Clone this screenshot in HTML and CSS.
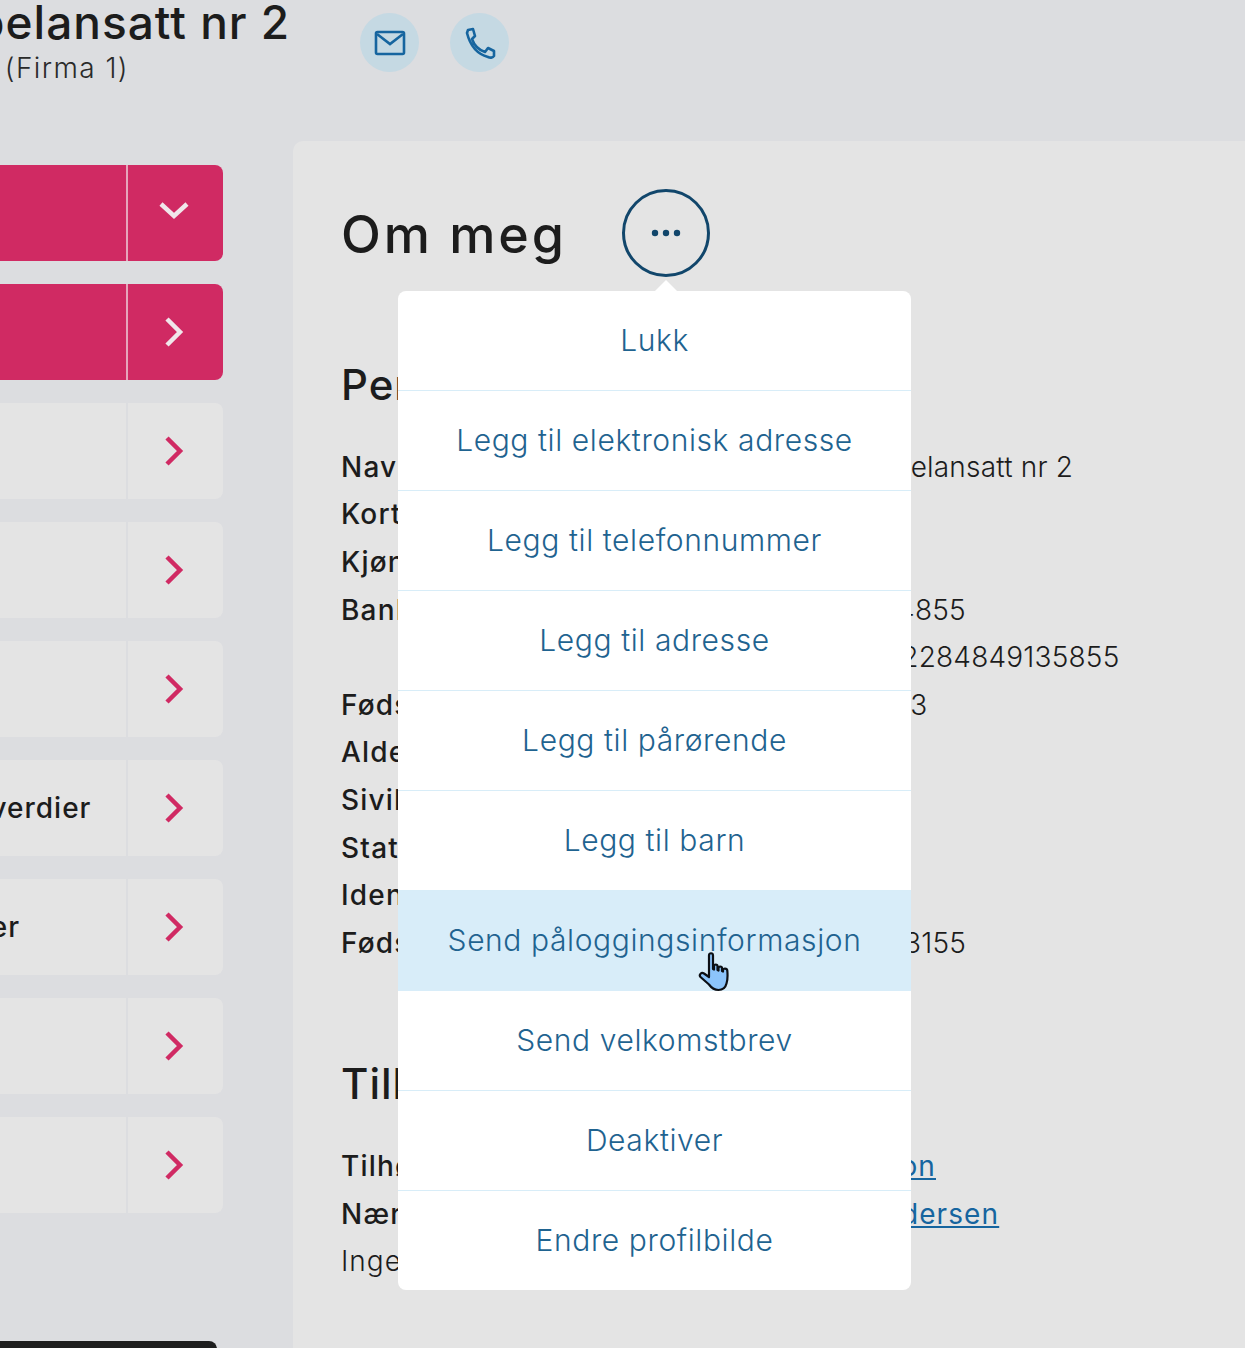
FILE: index.html
```html
<!DOCTYPE html>
<html lang="no">
<head>
<meta charset="utf-8">
<title>Om meg</title>
<link rel="stylesheet" href="styles.css">
</head>
<body>
<div class="page">
  <header class="top">
    <div class="who">
      <h1 class="name">Eksempelansatt nr 2</h1>
      <p class="firm">Fagrådgiver (Firma 1)</p>
    </div>
    <div class="contact">
      <a class="round"><svg viewBox="0 0 32 32" width="32" height="32"><rect x="2" y="5" width="28" height="22" rx="1.500" fill="none" stroke="#16659f" stroke-width="2.600"/><path d="M3 7l13 10L29 7" fill="none" stroke="#16659f" stroke-width="2.600"/></svg></a>
      <a class="round"><svg viewBox="0 0 32 32" width="32" height="32"><path d="M4 3l5-1 2 7-3 3c2 6 7 11 13 13l3-4 6 3v5c-1 2-4 2-6 1C13 27 6 18 3 6z" fill="none" stroke="#16659f" stroke-width="2.600" stroke-linejoin="round"/></svg></a>
    </div>
  </header>
  <div class="body">
    <aside class="side">
      <div class="tile hot"><span class="tile-label"></span><span class="tile-go"><svg class="chev down" viewBox="0 0 32 32" width="32" height="32"><path d="M3 10l13 12L29 10" fill="none" stroke="#f0e6ea" stroke-width="4.500"/></svg></span></div>
      <div class="tile hot"><span class="tile-label"></span><span class="tile-go"><svg class="chev" viewBox="0 0 32 32" width="32" height="32"><path d="M9 3l13 13L9 29" fill="none" stroke="#f0e6ea" stroke-width="4.500"/></svg></span></div>
      <div class="tile"><span class="tile-label"></span><span class="tile-go"><svg class="chev" viewBox="0 0 32 32" width="32" height="32"><path d="M9 3l13 13L9 29" fill="none" stroke="#d02a63" stroke-width="4.500"/></svg></span></div>
      <div class="tile"><span class="tile-label"></span><span class="tile-go"><svg class="chev" viewBox="0 0 32 32" width="32" height="32"><path d="M9 3l13 13L9 29" fill="none" stroke="#d02a63" stroke-width="4.500"/></svg></span></div>
      <div class="tile"><span class="tile-label"></span><span class="tile-go"><svg class="chev" viewBox="0 0 32 32" width="32" height="32"><path d="M9 3l13 13L9 29" fill="none" stroke="#d02a63" stroke-width="4.500"/></svg></span></div>
      <div class="tile"><span class="tile-label">Nøkkelverdier</span><span class="tile-go"><svg class="chev" viewBox="0 0 32 32" width="32" height="32"><path d="M9 3l13 13L9 29" fill="none" stroke="#d02a63" stroke-width="4.500"/></svg></span></div>
      <div class="tile"><span class="tile-label">Kalender</span><span class="tile-go"><svg class="chev" viewBox="0 0 32 32" width="32" height="32"><path d="M9 3l13 13L9 29" fill="none" stroke="#d02a63" stroke-width="4.500"/></svg></span></div>
      <div class="tile"><span class="tile-label"></span><span class="tile-go"><svg class="chev" viewBox="0 0 32 32" width="32" height="32"><path d="M9 3l13 13L9 29" fill="none" stroke="#d02a63" stroke-width="4.500"/></svg></span></div>
      <div class="tile"><span class="tile-label"></span><span class="tile-go"><svg class="chev" viewBox="0 0 32 32" width="32" height="32"><path d="M9 3l13 13L9 29" fill="none" stroke="#d02a63" stroke-width="4.500"/></svg></span></div>
      <div class="dark-bar"></div>
    </aside>
    <main class="panel">
      <div class="panel-head">
        <h2 class="title">Om meg</h2>
        <button class="more"><svg viewBox="0 0 32 8" width="32" height="8"><circle cx="5" cy="4" r="3.200"/><circle cx="16" cy="4" r="3.200"/><circle cx="27" cy="4" r="3.200"/></svg></button>
      </div>
      <h3 class="section first">Personalia</h3>
      <dl class="facts">
        <dt>Navn</dt><dd>Eksempelansatt nr 2</dd>
        <dt>Kortnavn</dt><dd></dd>
        <dt>Kjønn</dt><dd></dd>
        <dt>Bankkonto</dt><dd>1351284855</dd>
        <dt></dt><dd>NO0022284849135855</dd>
        <dt>Fødselsdato</dt><dd>4.01.1983</dd>
        <dt>Alder</dt><dd></dd>
        <dt>Sivilstatus</dt><dd></dd>
        <dt>Statsborger</dt><dd></dd>
        <dt>Identitet</dt><dd></dd>
        <dt>Fødselsnr</dt><dd>0108833155</dd>
      </dl>
      <h3 class="section second">Tilhørighet</h3>
      <dl class="facts">
        <dt>Tilhører</dt><dd><a class="link">IT-region</a></dd>
        <dt>Nærmeste leder</dt><dd><a class="link">Per Andersen</a></dd>
      </dl>
      <p class="none">Ingen underordnede</p>
      <div class="menu-arrow"></div>
      <nav class="menu">
        <a class="menu-item">Lukk</a>
        <a class="menu-item">Legg til elektronisk adresse</a>
        <a class="menu-item">Legg til telefonnummer</a>
        <a class="menu-item">Legg til adresse</a>
        <a class="menu-item">Legg til pårørende</a>
        <a class="menu-item">Legg til barn</a>
        <a class="menu-item active">Send påloggingsinformasjon</a>
        <a class="menu-item">Send velkomstbrev</a>
        <a class="menu-item">Deaktiver</a>
        <a class="menu-item">Endre profilbilde</a>
      </nav>
      <svg class="cursor" viewBox="0 0 32 40" width="32" height="40"><path d="M11 3.500c0-3 4-3 4 0V17l1 .5V14c0-2 3.500-2 3.500 0v4l1 .5V16c0-2 3.500-2 3.500 0v3l1 .5V18c0-2 4-2 4.300.5.500 5.500.2 10-.8 13-1 4-3.500 6.500-8 6.500-4.500 0-7-2-9.500-5.500L2.500 25c-2-2.500 1-5 3.500-3.500L11 25z" fill="#8cc4fb" stroke="#0c0f14" stroke-width="2.200" stroke-linejoin="round"/></svg>
    </main>
  </div>
</div>
</body>
</html>
```
FILE: styles.css
```css
* { box-sizing: border-box; }
html, body { margin: 0; padding: 0; }
body { font-family: Inter, "Open Sans", sans-serif; color: #1c1c1c; background: #dcdde0; }
.page { width: 1245px; height: 1348px; overflow: hidden; background: #dcdde0; }

.top { height: 141px; display: flex; align-items: flex-start; margin-left: -175px; }
.who { width: 535px; flex: none; }
.name { margin: -6px 0 0; font-size: 46px; line-height: 56px; font-weight: 500; letter-spacing: 1px; white-space: nowrap; }
.firm { margin: 0; font-size: 28px; line-height: 36px; font-weight: 300; letter-spacing: 1.4px; color: #2a2a2a; white-space: nowrap; }
.contact { display: flex; gap: 31px; padding-top: 13px; }
.round { width: 59px; height: 59px; border-radius: 50%; background: #c5d9e3; display: flex; align-items: center; justify-content: center; }

.body { display: flex; height: 1207px; }
.side { width: 403px; margin-left: -180px; margin-right: 70px; padding-top: 24px; display: flex; flex-direction: column; gap: 23.5px; flex: none; }
.tile { height: 95.5px; display: flex; background: #e4e4e4; border-radius: 8px; flex: none; }
.tile.hot { background: #d02a63; }
.tile-label { flex: 1; padding-left: 72px; font-size: 28px; font-weight: 500; letter-spacing: 1px; align-self: center; white-space: nowrap; overflow: hidden; }
.tile-go { width: 97px; display: flex; align-items: center; justify-content: center; border-left: 2px solid #dcdde0; padding-right: 4px; }
.tile.hot .tile-go { border-left-color: #e6a5bb; }
.chev.down { margin-bottom: 5px; }
.dark-bar { width: 397px; height: 30px; background: #1e1e1e; border-radius: 8px 8px 0 0; margin-top: 104.5px; flex: none; }

.panel { position: relative; flex: 1; background: #e4e4e4; border-radius: 10px 0 0 0; padding: 48px 0 0 48px; min-width: 0; }
.panel-head { display: flex; align-items: center; gap: 57px; height: 88px; }
.title { margin: 4px 0 0; width: 224px; font-size: 52px; font-weight: 500; letter-spacing: 2.8px; line-height: 84px; white-space: nowrap; flex: none; }
.more { width: 88px; height: 88px; border: 3px solid #11466b; border-radius: 50%; background: transparent; padding: 0; display: flex; align-items: center; justify-content: center; flex: none; }
.more svg { fill: #11466b; }
.section { margin: 0; font-size: 42px; line-height: 56px; font-weight: 500; letter-spacing: 1px; white-space: nowrap; }
.section.first { margin-top: 80px; margin-bottom: 30px; }
.section.second { margin-top: 89px; margin-bottom: 31px; }
.facts { margin: 0; display: grid; grid-template-columns: 465px 1fr; grid-auto-rows: 47.6px; align-items: center; font-size: 28px; }
.facts dt { font-weight: 500; letter-spacing: 1.2px; white-space: nowrap; }
.facts dd { margin: 0; font-weight: 300; letter-spacing: .2px; white-space: nowrap; }
.link { color: #16659f; text-decoration: underline; font-weight: 400; letter-spacing: 1.1px; }
.none { margin: 0; font-size: 28px; line-height: 47.6px; font-weight: 300; letter-spacing: 1px; white-space: nowrap; }

.menu-arrow { position: absolute; left: 362px; top: 139px; width: 0; height: 0; border-left: 11px solid transparent; border-right: 11px solid transparent; border-bottom: 11px solid #fff; }
.menu { position: absolute; left: 105px; top: 150px; width: 513px; background: #fff; border-radius: 8px; overflow: hidden; display: flex; flex-direction: column; }
.menu-item { height: 100px; display: flex; align-items: center; justify-content: center; padding-bottom: 2px; border-bottom: 1px solid #d8edf8; font-size: 30px; font-weight: 300; letter-spacing: .6px; color: #1f6390; }
.menu-item:last-child { border-bottom: 0; height: 99px; }
.menu-item.active { background: #d8edf9; border-bottom-color: #d8edf9; }
.cursor { position: absolute; left: 405px; top: 811px; }
```
